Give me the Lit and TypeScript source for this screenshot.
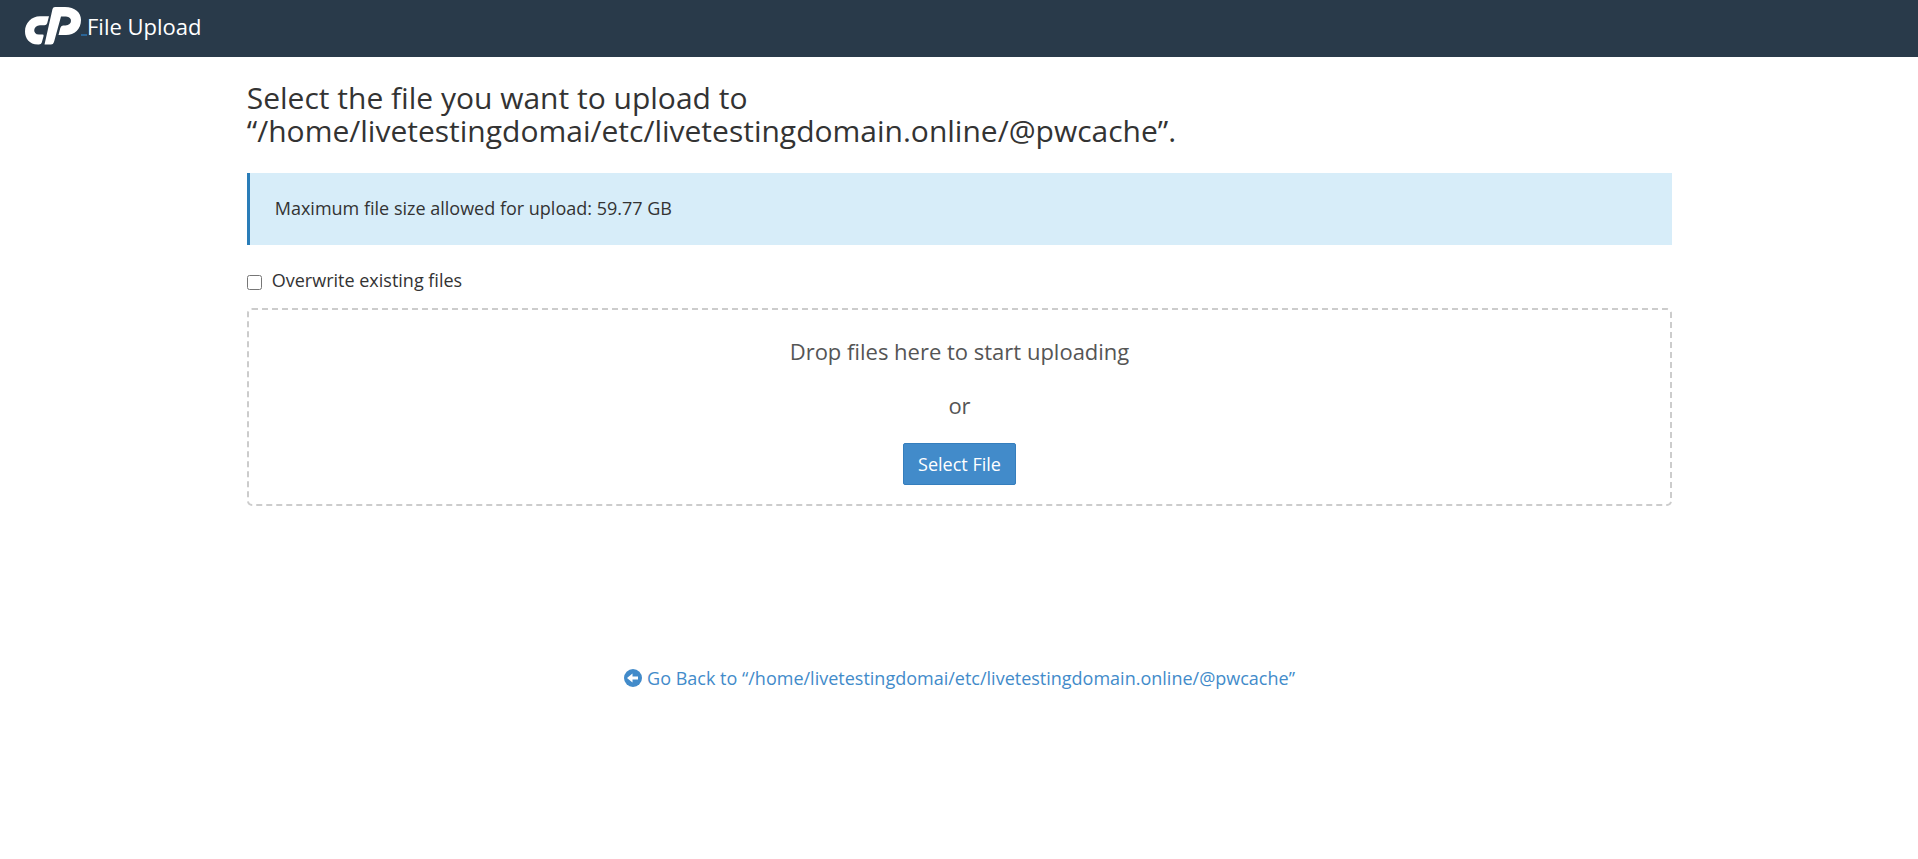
import { LitElement, html, css } from "lit";
import { customElement, state } from "lit/decorators.js";

const DIRECTORY = "/home/livetestingdomai/etc/livetestingdomain.online/@pwcache";

@customElement("app-root")
export class AppRoot extends LitElement {
  @state() private overwrite = false;

  static styles = css`
    :host {
      display: block;
      min-height: 100vh;
      background: #fff;
      color: #333;
      font-family: "Open Sans", "Noto Sans", sans-serif;
      font-size: 18px;
      line-height: 26px;
    }
    * {
      box-sizing: border-box;
    }
    .header {
      display: flex;
      align-items: center;
      height: 57px;
      padding: 0 24px 5px;
      background: #293a4a;
      color: #fff;
    }
    .brand {
      display: flex;
      align-items: flex-end;
      color: #286090;
      text-decoration: none;
    }
    .logo {
      display: block;
      width: 57px;
      height: 40px;
    }
    .brand-line {
      width: 6px;
      height: 2px;
      margin-bottom: 10px;
      background: #2a6496;
    }
    .title {
      font-size: 22px;
    }
    .content {
      width: 75%;
      margin: 0 auto;
      padding: 24px 6px 24px 7px;
    }
    h1 {
      margin: 0 0 26px;
      font-size: 30px;
      font-weight: 400;
      line-height: 33px;
    }
    .notice {
      padding: 22px 25px 24px;
      border-left: 3px solid #2a7db8;
      background: #d7edf9;
    }
    .overwrite {
      display: flex;
      align-items: center;
      gap: 10px;
      width: max-content;
      margin: 22px 0 15px;
    }
    .overwrite input {
      width: 15px;
      height: 15px;
      margin: 4px 0 0;
    }
    .drop {
      display: flex;
      flex-direction: column;
      align-items: center;
      padding: 24px 20px 19px;
      border: 2px dashed #ccc;
      border-radius: 5px;
      color: #555;
      font-size: 22px;
      line-height: 34px;
    }
    .drop p {
      margin: 0 0 20px;
    }
    .select {
      margin-top: 1px;
      padding: 7px 14px;
      border: 1px solid #357ebd;
      border-radius: 2px;
      background: #428bca;
      color: #fff;
      font: inherit;
      font-size: 18px;
      line-height: 26px;
      cursor: pointer;
    }
    .back {
      display: flex;
      justify-content: center;
      margin-top: 159px;
    }
    .back a {
      display: flex;
      align-items: center;
      gap: 5px;
      color: #428bca;
      text-decoration: none;
    }
    .arrow {
      width: 18px;
      height: 18px;
    }
  `;

  private chooseFile() {
    this.renderRoot.querySelector<HTMLInputElement>("#file")?.click();
  }

  render() {
    return html`
      <header class="header">
        <a class="brand" href="#" aria-label="cPanel">
          <svg class="logo" viewBox="0 0 57 40" fill="#fff" aria-hidden="true">
            <path d="M16 10.300H25L23.200 17.200Q22.500 19.300 20.500 19.300H16C9 19.300 8 28.600 15 28.600H18.500Q20 28.600 19.600 30L17.800 36.500Q17.200 38.500 15 38.500H14C5 38.500 1 32 1 25.500C1 17 7.500 10.300 16 10.300Z" />
            <path d="M31 1H41C51 1 57 6.500 57 14C57 23 50.500 29 42 29H34.500L36.300 22Q37 19.500 39 19.500H41.500C48.500 19.500 49 10.500 42 10.500H37L30 36Q29.300 38.500 27 38.500H20.500L28.500 3Q29 1 31 1Z" />
          </svg>
          <span class="brand-line"></span>
        </a>
        <span class="title">File Upload</span>
      </header>
      <main class="content">
        <h1>Select the file you want to upload to<br />“${DIRECTORY}”.</h1>
        <div class="notice">Maximum file size allowed for upload: 59.77 GB</div>
        <label class="overwrite">
          <input
            type="checkbox"
            .checked=${this.overwrite}
            @change=${(e: Event) => (this.overwrite = (e.target as HTMLInputElement).checked)}
          />
          <span>Overwrite existing files</span>
        </label>
        <section class="drop">
          <p>Drop files here to start uploading</p>
          <p>or</p>
          <button class="select" type="button" @click=${this.chooseFile}>Select File</button>
          <input id="file" type="file" aria-label="File" hidden />
        </section>
        <nav class="back">
          <a href="#">
            <svg class="arrow" viewBox="0 0 18 18" aria-hidden="true">
              <circle cx="9" cy="9" r="9" fill="#428bca" />
              <path d="M3 9L8.500 4.500V7.500H14V10.500H8.500V13.500Z" fill="#fff" />
            </svg>
            <span>Go Back to “${DIRECTORY}”</span>
          </a>
        </nav>
      </main>
    `;
  }
}
